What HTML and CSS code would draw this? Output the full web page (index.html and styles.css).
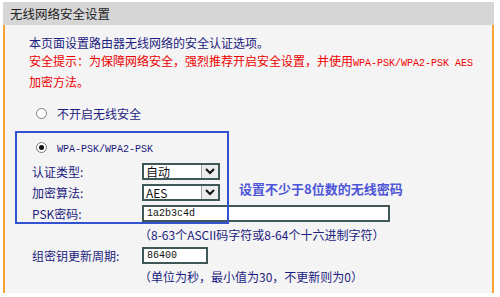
FILE: index.html
```html
<!DOCTYPE html>
<html lang="zh-CN">
<head>
    <meta charset="UTF-8">
    <meta name="viewport" content="width=device-width, initial-scale=1.0">
    <title>无线网络安全设置</title>
    <link rel="stylesheet" href="styles.css">
</head>
<body>

    <div class="frame">
        <div class="title">无线网络安全设置</div>
        <div class="panel">
            <p class="intro">本页面设置路由器无线网络的安全认证选项。<br><span class="warn">安全提示：为保障网络安全，强烈推荐开启安全设置，并使用<span class="mono">WPA-PSK/WPA2-PSK AES</span><br>加密方法。</span></p>

            <div class="option first"><span class="radio"></span>不开启无线安全</div>
            <div class="option second"><span class="radio checked"></span><span class="mono">WPA-PSK/WPA2-PSK</span></div>

            <div class="form">
                <div class="row">
                    <span class="label">认证类型:</span>
                    <div class="select">
                        <span class="value">自动</span>
                        <span class="arrow"><svg width="10" height="7" viewBox="0 0 10 7"><polyline points="1,1 5,5 9,1" fill="none" stroke="#111" stroke-width="2"/></svg></span>
                    </div>
                </div>
                <div class="row">
                    <span class="label">加密算法:</span>
                    <div class="select">
                        <span class="value">AES</span>
                        <span class="arrow"><svg width="10" height="7" viewBox="0 0 10 7"><polyline points="1,1 5,5 9,1" fill="none" stroke="#111" stroke-width="2"/></svg></span>
                    </div>
                    <span class="tip">设置不少于8位数的无线密码</span>
                </div>
                <div class="row">
                    <span class="label">PSK密码:</span>
                    <div class="input wide">1a2b3c4d</div>
                </div>
                <div class="row hint">（8-63个ASCII码字符或8-64个十六进制字符）</div>
                <div class="row">
                    <span class="label">组密钥更新周期:</span>
                    <div class="input short">86400</div>
                </div>
                <div class="row hint">（单位为秒，最小值为30，不更新则为0）</div>
            </div>

            <!-- annotation box drawn over the WPA settings -->
            <div class="mark"></div>
        </div>
    </div>

</body>
</html>
```

FILE: styles.css
```css
body {
    margin: 0;
    background: #fff;
    font-family: "Noto Sans CJK SC", "Liberation Sans", sans-serif;
    font-size: 12px;
    color: #1c1c80;
}
.frame {
    width: 491px;
    margin: 2px 0 0 3px;
}
.title {
    height: 23px;
    line-height: 23px;
    padding-left: 7px;
    background: #d6d6d6;
    color: #222;
    font-size: 12.5px;
}
.panel {
    position: relative;
    box-sizing: border-box;
    height: 268px;
    padding: 9px 0 0 24px;
    background: #f4f4f4;
    border-left: 2px solid #f7a234;
    border-right: 2px solid #f7a234;
}
.intro {
    margin: 0;
    line-height: 18px;
}
.warn {
    color: #ee0000;
}
.mono {
    font-family: "Liberation Mono", monospace;
    font-size: 10px;
}
.option {
    display: flex;
    align-items: center;
    height: 20px;
}
.option.first {
    margin-top: 12px;
}
.option.second {
    margin-top: 14px;
}
.option.second .mono {
    margin-top: 4px;
}
.radio {
    position: relative;
    box-sizing: border-box;
    width: 11px;
    height: 11px;
    margin: 0 10px 0 7px;
    border: 1px solid #7a7a7a;
    border-radius: 50%;
    background: #fff;
}
.radio.checked::after {
    content: "";
    position: absolute;
    left: 2px;
    top: 2px;
    width: 5px;
    height: 5px;
    border-radius: 50%;
    background: #111;
}
.form {
    display: flex;
    flex-direction: column;
    margin: 4px 0 0 3px;
}
.row {
    display: flex;
    align-items: center;
    height: 21px;
}
.label {
    width: 110px;
}
.select {
    box-sizing: border-box;
    display: flex;
    width: 78px;
    height: 17px;
    border: 2px solid #3f5757;
    background: #fff;
    color: #111;
}
.value {
    flex: 1;
    padding-left: 2px;
    line-height: 13px;
}
.arrow {
    display: flex;
    align-items: center;
    justify-content: center;
    width: 16px;
    border-left: 1px solid #9aa6a6;
    background: #ececec;
}
.tip {
    align-self: flex-start;
    margin-left: 19px;
    line-height: 14px;
    font-size: 13px;
    font-weight: bold;
    color: #4d55d8;
}
.input {
    box-sizing: border-box;
    height: 17px;
    padding-left: 3px;
    line-height: 13px;
    border: 2px solid #3f5757;
    background: #fff;
    color: #111;
    font-family: "Liberation Mono", monospace;
    font-size: 10px;
}
.input.wide {
    width: 248px;
}
.input.short {
    width: 66px;
}
.hint {
    padding-left: 107px;
}
.mark {
    position: absolute;
    left: 10px;
    top: 106px;
    box-sizing: border-box;
    width: 214px;
    height: 93px;
    border: 2px solid #3352d0;
}
```
